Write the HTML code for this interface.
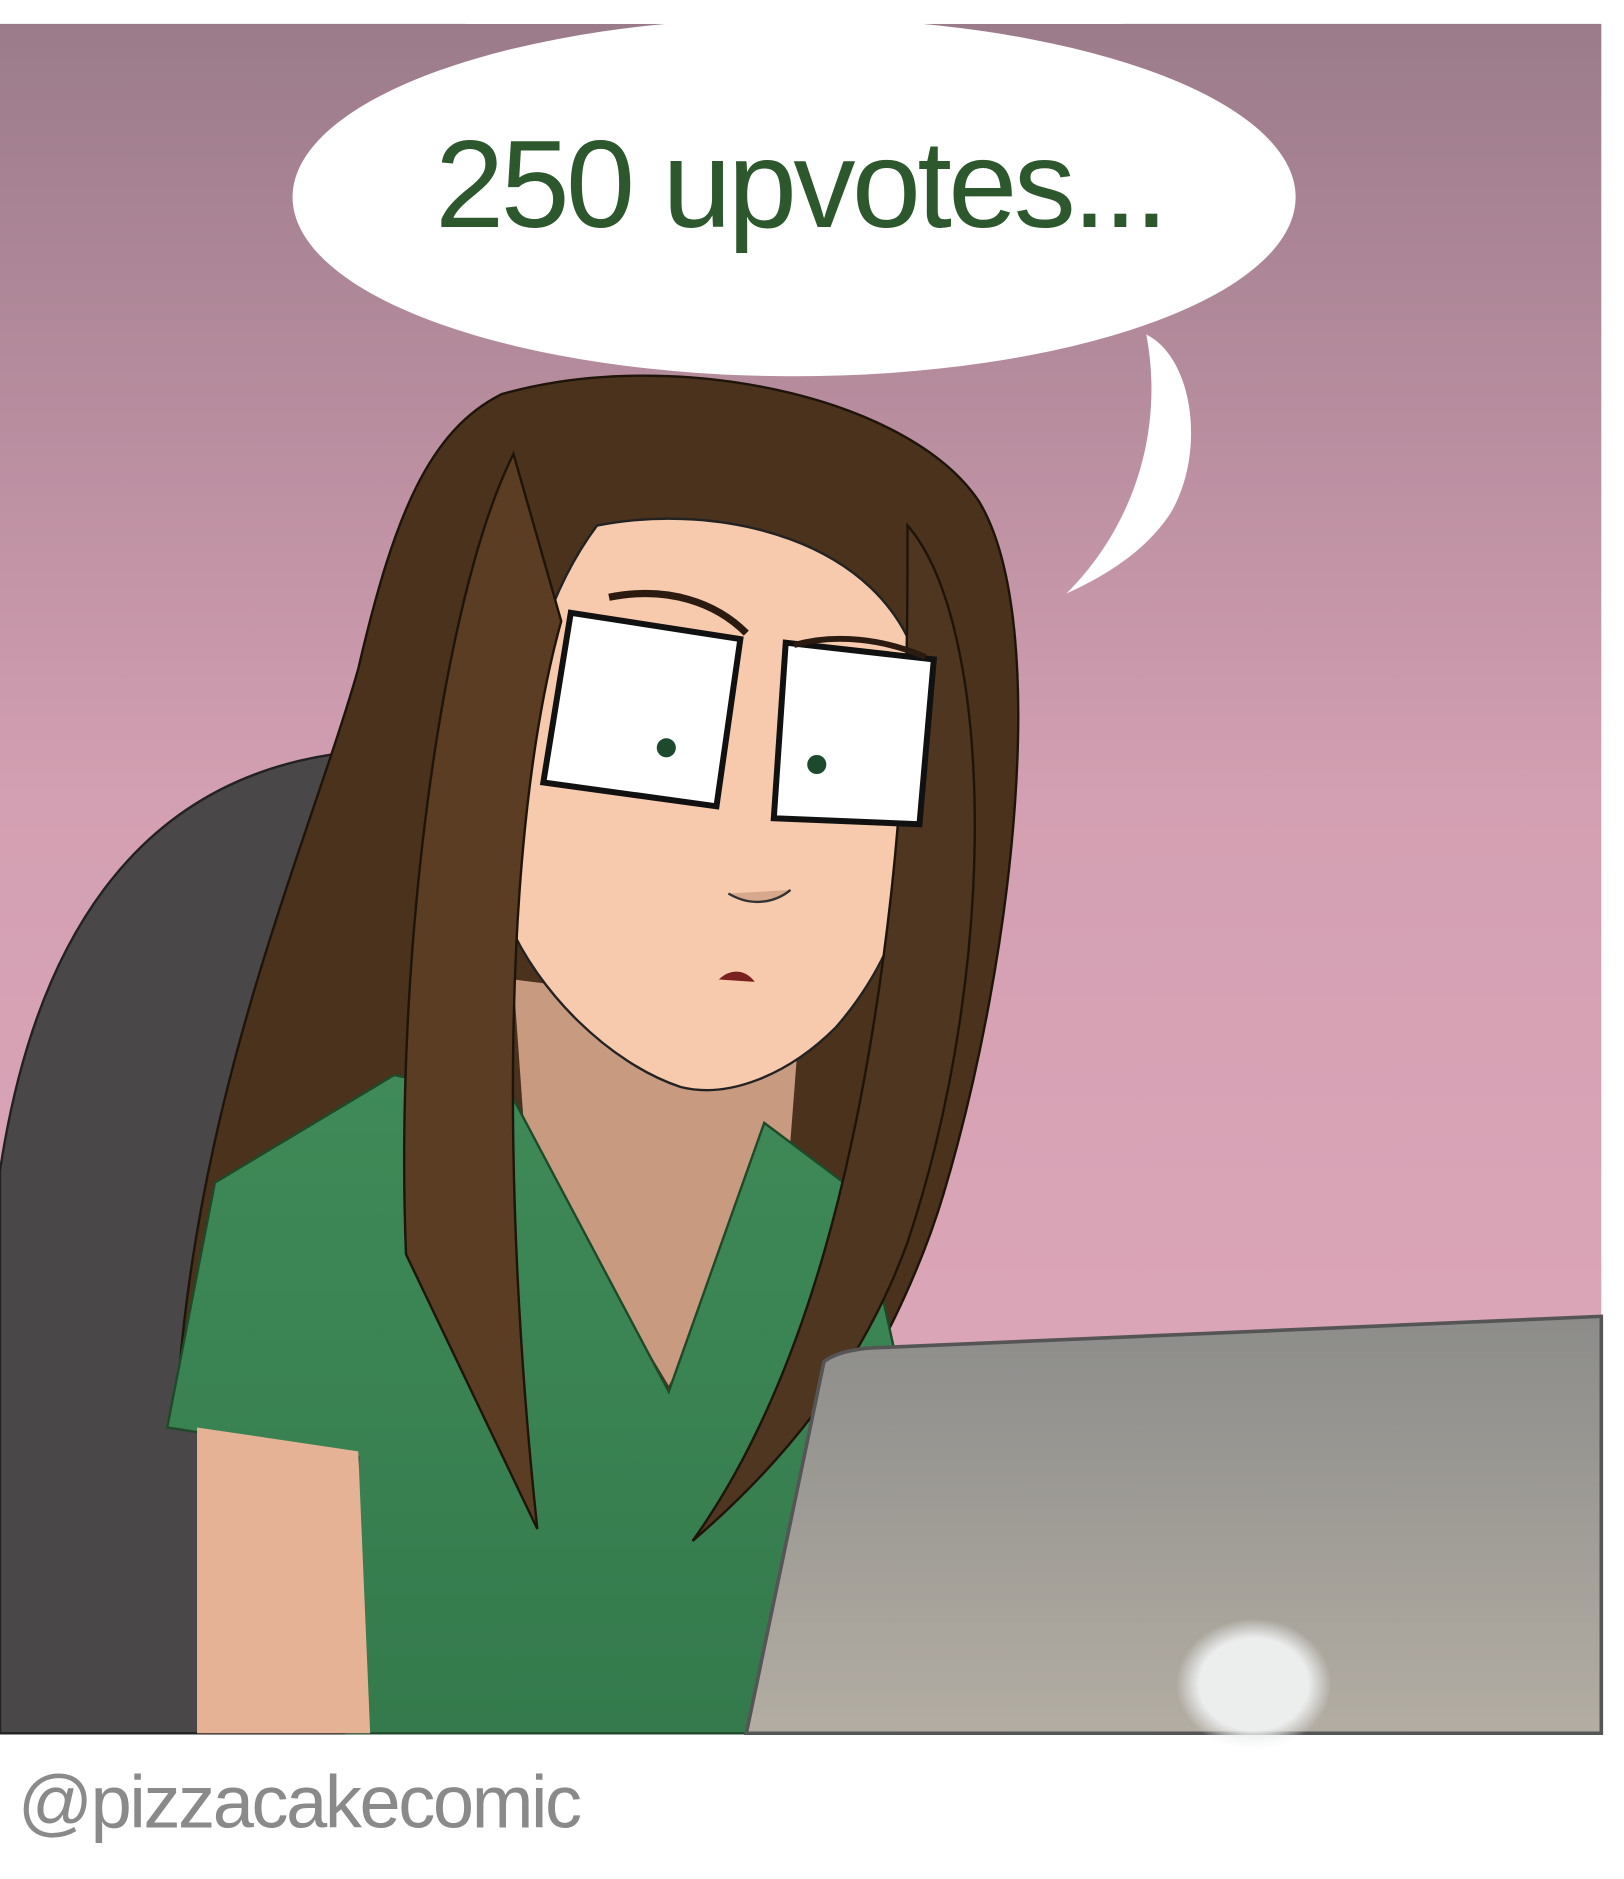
<!DOCTYPE html>
<html><head><meta charset="utf-8"><style>
html,body{margin:0;padding:0;background:#fff;width:1624px;height:1879px;overflow:hidden}
svg{display:block}
</style></head><body>
<svg width="1624" height="1879" viewBox="0 0 1360 1573" preserveAspectRatio="none" xmlns="http://www.w3.org/2000/svg">
<defs>
<linearGradient id="bg" x1="0" y1="0" x2="0" y2="1">
<stop offset="0" stop-color="#9b7b8a"/><stop offset="0.45" stop-color="#d39fb2"/><stop offset="1" stop-color="#e0aabb"/>
</linearGradient>
<linearGradient id="lap" x1="0" y1="0" x2="0" y2="1">
<stop offset="0" stop-color="#8c8c8a"/><stop offset="1" stop-color="#b3ada3"/>
</linearGradient>
<linearGradient id="shirt" x1="0" y1="0" x2="0" y2="1">
<stop offset="0" stop-color="#3f8a58"/><stop offset="1" stop-color="#347a4c"/>
</linearGradient>
<radialGradient id="glow"><stop offset="0.7" stop-color="#eceeee"/><stop offset="1" stop-color="#eceeee" stop-opacity="0"/></radialGradient>
</defs>
<rect x="0" y="0" width="1360" height="1573" fill="#fff"/>
<rect x="0" y="20" width="1341" height="1431" fill="url(#bg)"/>
<!-- chair -->
<path d="M0 980 C30 780 120 650 290 630 L300 1451 L0 1451 Z" fill="#4a4748" stroke="#222" stroke-width="2"/>
<!-- hair back -->
<path d="M420 330 C560 290 760 330 820 420 C880 520 850 800 790 1000 C760 1100 700 1200 640 1280 L560 1180 L400 1180 L360 1300 L150 1150 C170 900 260 700 300 560 C330 430 360 360 420 330 Z" fill="#4a321c" stroke="#1e140a" stroke-width="2"/>
<!-- neck & chest -->
<path d="M430 820 L440 960 L560 1160 L660 980 L670 850 Z" fill="#c89a80"/>
<!-- face -->
<path d="M500 440 C600 420 740 450 770 560 C780 680 770 780 700 860 C660 900 610 920 570 910 C510 890 450 830 425 770 C420 650 440 520 500 440 Z" fill="#f7caae" stroke="#222" stroke-width="2"/>
<!-- shirt -->
<path d="M180 990 L330 900 L430 920 L560 1165 L640 940 L720 1000 L760 1180 L700 1451 L290 1451 L300 1220 L140 1195 Z" fill="url(#shirt)" stroke="#1f4a2a" stroke-width="2"/>
<!-- arm -->
<path d="M165 1195 L300 1215 L310 1451 L165 1451 Z" fill="#e5b295"/>
<!-- front hair strands -->
<path d="M430 380 C370 500 330 800 340 1050 L450 1280 C420 1000 420 700 470 520 Z" fill="#5a3d22" stroke="#1e140a" stroke-width="2"/>
<path d="M760 440 C830 520 840 800 760 1040 C720 1150 650 1230 580 1290 C680 1150 720 950 740 800 C760 650 760 540 760 440 Z" fill="#4f3620" stroke="#1e140a" stroke-width="2"/>
<!-- glasses / eyes -->
<path d="M478 513 L620 535 L600 675 L455 655 Z" fill="#fff" stroke="#111" stroke-width="5"/>
<path d="M658 538 L782 552 L770 690 L648 685 Z" fill="#fff" stroke="#111" stroke-width="5"/>
<circle cx="558" cy="626" r="8" fill="#1d4a2c"/><circle cx="684" cy="640" r="8" fill="#1d4a2c"/>
<path d="M510 500 C560 490 600 505 625 530" stroke="#2a1a10" stroke-width="6" fill="none"/>
<path d="M665 540 C700 530 740 535 775 550" stroke="#2a1a10" stroke-width="5" fill="none"/>
<path d="M610 748 C630 760 650 755 662 745" stroke="#333" stroke-width="2" fill="#d8a88c"/>
<path d="M602 820 C612 810 625 812 632 822 Z" fill="#7a2020"/>
<!-- laptop -->
<path d="M690 1140 C700 1132 720 1128 740 1128 L1341 1102 L1341 1451 L625 1451 Z" fill="url(#lap)" stroke="#555" stroke-width="3"/>
<ellipse cx="1050" cy="1410" rx="65" ry="55" fill="url(#glow)"/>
<!-- speech bubble -->
<path d="M960 280 C1000 300 1010 380 980 430 C960 460 930 480 893 497 C950 440 975 360 960 280 Z" fill="#fff"/>
<ellipse cx="665" cy="165" rx="420" ry="150" fill="#fff"/>
<rect x="390" y="0" width="550" height="20" fill="#fff"/>
<text x="670" y="190" text-anchor="middle" font-family="Liberation Sans, sans-serif" font-size="104" fill="#2d572d" letter-spacing="-3">250 upvotes...</text>
<text x="15" y="1530" font-family="Liberation Sans, sans-serif" font-size="62" fill="#8a8a8a" letter-spacing="-2">@pizzacakecomic</text>
</svg>
</body></html>
